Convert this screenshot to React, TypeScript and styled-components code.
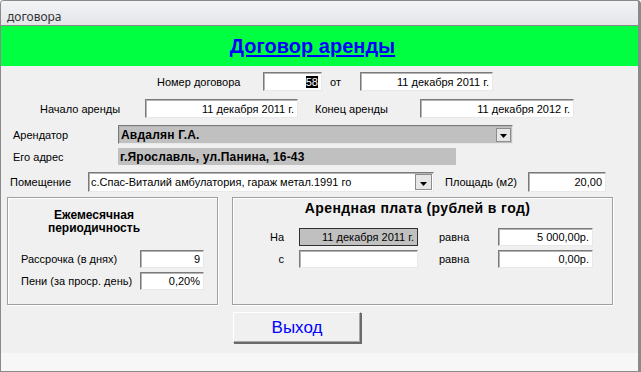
import styled, { createGlobalStyle } from 'styled-components';

const GlobalStyle = createGlobalStyle`
    html, body {
        margin: 0;
        padding: 0;
        background: #ffffff;
    }
    body {
        font-family: "Liberation Sans", Arial, sans-serif;
        font-size: 11px;
        color: #000;
    }
`;

const Window = styled.div`
    width: 641px;
    height: 372px;
    box-sizing: border-box;
    border: 1px solid #8a8a8a;
    border-right-width: 3px;
    border-radius: 4px 4px 0 0;
    display: flex;
    flex-direction: column;
    overflow: hidden;
    background: #f0f0f0;
`;

const TitleBar = styled.div`
    flex: none;
    height: 25px;
    box-sizing: border-box;
    padding: 8px 0 0 6px;
    background: linear-gradient(#f3f4f6, #e3e5e9);
    border-bottom: 1px solid #8a8a8a;
    font-family: "Noto Sans", "Open Sans", sans-serif;
    font-size: 12px;
    line-height: 15px;
    color: #333;
`;

const Header = styled.div`
    flex: none;
    height: 40px;
    background: #00ff40;
    display: flex;
    align-items: center;
    justify-content: center;
`;

const HeaderTitle = styled.a`
    font-size: 20px;
    font-weight: bold;
    color: #0000ff;
    text-decoration: underline;
    text-underline-offset: 2px;
    margin-left: -14px;
`;

const Body = styled.div`
    flex: none;
    height: 287px;
    box-sizing: border-box;
    padding-top: 6px;
`;

const Footer = styled.div`
    flex: 1;
    background: #f7f7f7;
`;

const Row = styled.div<{ $top: number; $left: number; $h?: number }>`
    display: flex;
    align-items: center;
    margin-top: ${({ $top }) => $top}px;
    padding-left: ${({ $left }) => $left}px;
    height: ${({ $h }) => $h ?? 19}px;
`;

const Label = styled.span<{ $w: number; $pad?: number; $right?: boolean }>`
    flex: none;
    width: ${({ $w }) => $w}px;
    box-sizing: border-box;
    padding-left: ${({ $pad }) => $pad ?? 0}px;
    padding-right: ${({ $right }) => ($right ? 15 : 0)}px;
    text-align: ${({ $right }) => ($right ? 'right' : 'left')};
    white-space: nowrap;
`;

const Field = styled.div<{ $w?: number; $kind?: 'sunken' | 'locked' | 'static' }>`
    flex: none;
    width: ${({ $w }) => ($w ? `${$w}px` : 'auto')};
    height: 100%;
    box-sizing: border-box;
    display: flex;
    align-items: center;
    justify-content: flex-end;
    padding: 0 3px;
    white-space: nowrap;
    overflow: hidden;
    ${({ $kind }) =>
        $kind === 'locked'
            ? `
        background: #c0c0c0;
        border: 1px solid #303030;
        `
            : $kind === 'static'
            ? `
        background: #c0c0c0;
        justify-content: flex-start;
        font-weight: bold;
        font-size: 12px;
        letter-spacing: 0.2px;
        padding-left: 2px;
        `
            : `
        background: #ffffff;
        border: 1px solid;
        border-color: #7a7a7a #e8e8e8 #e8e8e8 #7a7a7a;
        box-shadow: inset 1px 1px 0 #b4b4b4;
        `}
`;

const Selected = styled.span`
    background: #000;
    color: #fff;
`;

const Combo = styled.div<{ $w: number; $gray?: boolean }>`
    flex: none;
    width: ${({ $w }) => $w}px;
    height: 100%;
    box-sizing: border-box;
    display: flex;
    align-items: center;
    padding: 0 1px 0 2px;
    background: ${({ $gray }) => ($gray ? '#c0c0c0' : '#ffffff')};
    border: 1px solid;
    border-color: #7a7a7a #e8e8e8 #e8e8e8 #7a7a7a;
    box-shadow: inset 1px 1px 0 #b4b4b4;
    white-space: nowrap;
`;

const ComboText = styled.span<{ $bold?: boolean }>`
    flex: 1;
    overflow: hidden;
    font-weight: ${({ $bold }) => ($bold ? 'bold' : 'normal')};
    font-size: ${({ $bold }) => ($bold ? 12 : 11)}px;
    letter-spacing: ${({ $bold }) => ($bold ? 0.2 : 0)}px;
`;

const DropButton = styled.div<{ $w: number; $h: number }>`
    flex: none;
    width: ${({ $w }) => $w}px;
    height: ${({ $h }) => $h}px;
    box-sizing: border-box;
    background: #e6e6e6;
    border: 1px solid #8c8c8c;
    display: flex;
    align-items: flex-end;
    justify-content: center;
    padding-bottom: 3px;
`;

const Groups = styled.div`
    display: flex;
    gap: 14px;
    margin-top: 5px;
    padding-left: 6px;
    height: 108px;
`;

const GroupBox = styled.div<{ $w: number }>`
    flex: none;
    width: ${({ $w }) => $w}px;
    height: 100%;
    box-sizing: border-box;
    border: 1px solid #a0a0a0;
    box-shadow: inset 1px 1px 0 #ffffff, 1px 1px 0 #ffffff;
`;

const MonthlyTitle = styled.div`
    width: 172px;
    padding-top: 11px;
    text-align: center;
    font-weight: bold;
    font-size: 12px;
    line-height: 13px;
`;

const MonthlyRows = styled.div`
    display: flex;
    flex-direction: column;
    gap: 4px;
    margin-top: 15px;
    padding-left: 13px;
`;

const SmallRow = styled.div`
    display: flex;
    align-items: center;
    height: 18px;
`;

const RentTitle = styled.div`
    padding: 3px 10px 0 0;
    text-align: center;
    font-weight: bold;
    font-size: 14px;
    letter-spacing: 0.4px;
    line-height: 15px;
`;

const RentGrid = styled.div`
    display: grid;
    grid-template-columns: 66px 119px 80px 95px;
    grid-auto-rows: 18px;
    row-gap: 4px;
    align-items: center;
    margin-top: 12px;
`;

const ButtonRow = styled.div`
    margin-top: 7px;
    padding-left: 232px;
`;

const ExitButton = styled.button`
    width: 128px;
    height: 31px;
    box-sizing: border-box;
    background: #f0f0f0;
    border: 1px solid;
    border-color: #ffffff #6a6a6a #6a6a6a #ffffff;
    box-shadow: 1px 1px 0 #6a6a6a, inset -1px -1px 0 #a8a8a8;
    font-family: "Liberation Sans", Arial, sans-serif;
    font-size: 17px;
    color: #0000ff;
    padding: 0;
`;

const Arrow = () => (
    <svg width="7" height="4" viewBox="0 0 7 4">
        <polygon points="0,0 7,0 3.5,4" fill="#000" />
    </svg>
);

const App = () => {
    return (
        <>
            <GlobalStyle />
            <Window>
                <TitleBar>договора</TitleBar>
                <Header>
                    <HeaderTitle>Договор аренды</HeaderTitle>
                </Header>
                <Body>
                    <Row $top={0} $left={156}>
                        <Label $w={106}>Номер договора</Label>
                        <Field $w={59}>
                            <Selected>58</Selected>
                        </Field>
                        <Label $w={38} $pad={8}>от</Label>
                        <Field $w={133}>11 декабря 2011 г.</Field>
                    </Row>
                    <Row $top={8} $left={39}>
                        <Label $w={105}>Начало аренды</Label>
                        <Field $w={153}>11 декабря 2011 г.</Field>
                        <Label $w={122} $pad={17}>Конец аренды</Label>
                        <Field $w={154}>11 декабря 2012 г.</Field>
                    </Row>
                    <Row $top={7} $left={12}>
                        <Label $w={105}>Арендатор</Label>
                        <Combo $w={395} $gray>
                            <ComboText $bold>Авдалян Г.А.</ComboText>
                            <DropButton $w={15} $h={14}>
                                <Arrow />
                            </DropButton>
                        </Combo>
                    </Row>
                    <Row $top={4} $left={12} $h={17}>
                        <Label $w={105}>Его адрес</Label>
                        <Field $w={338} $kind="static">
                            г.Ярославль, ул.Панина, 16-43
                        </Field>
                    </Row>
                    <Row $top={7} $left={9} $h={20}>
                        <Label $w={78}>Помещение</Label>
                        <Combo $w={346}>
                            <ComboText>с.Спас-Виталий амбулатория, гараж метал.1991 го</ComboText>
                            <DropButton $w={17} $h={16}>
                                <Arrow />
                            </DropButton>
                        </Combo>
                        <Label $w={94} $pad={11}>Площадь (м2)</Label>
                        <Field $w={78}>20,00</Field>
                    </Row>
                    <Groups>
                        <GroupBox $w={211}>
                            <MonthlyTitle>
                                Ежемесячная
                                <br />
                                периодичность
                            </MonthlyTitle>
                            <MonthlyRows>
                                <SmallRow>
                                    <Label $w={119}>Рассрочка (в днях)</Label>
                                    <Field $w={64}>9</Field>
                                </SmallRow>
                                <SmallRow>
                                    <Label $w={119}>Пени (за проср. день)</Label>
                                    <Field $w={64}>0,20%</Field>
                                </SmallRow>
                            </MonthlyRows>
                        </GroupBox>
                        <GroupBox $w={381}>
                            <RentTitle>Арендная плата (рублей в год)</RentTitle>
                            <RentGrid>
                                <Label $w={66} $right>На</Label>
                                <Field $kind="locked">11 декабря 2011 г.</Field>
                                <Label $w={80} $pad={21}>равна</Label>
                                <Field>5 000,00р.</Field>
                                <Label $w={66} $right>с</Label>
                                <Field></Field>
                                <Label $w={80} $pad={21}>равна</Label>
                                <Field>0,00р.</Field>
                            </RentGrid>
                        </GroupBox>
                    </Groups>
                    <ButtonRow>
                        <ExitButton>Выход</ExitButton>
                    </ButtonRow>
                </Body>
                <Footer />
            </Window>
        </>
    );
};

export default App;
